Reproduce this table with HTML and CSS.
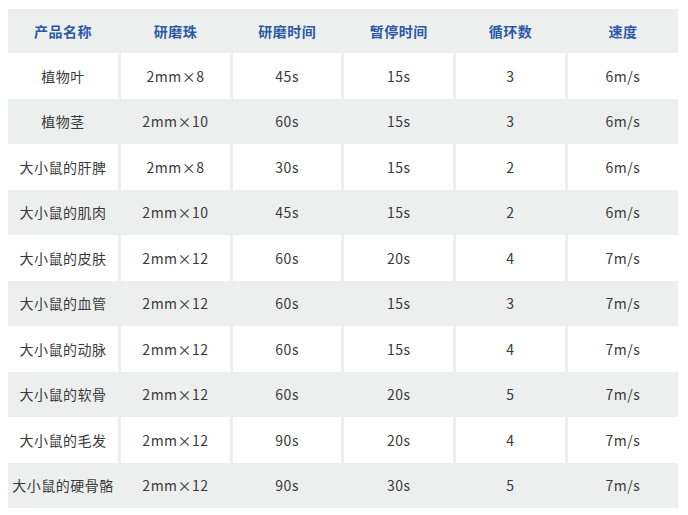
FILE: index.html
```html
<!DOCTYPE html>
<html lang="zh">
<head>
<meta charset="utf-8">
<link rel="stylesheet" href="styles.css">
</head>
<body>
<table class="spec">
<thead>
<tr><th>产品名称</th><th>研磨珠</th><th>研磨时间</th><th>暂停时间</th><th>循环数</th><th>速度</th></tr>
</thead>
<tbody>
<tr><td>植物叶</td><td>2mm×8</td><td>45s</td><td>15s</td><td>3</td><td>6m/s</td></tr>
<tr><td>植物茎</td><td>2mm×10</td><td>60s</td><td>15s</td><td>3</td><td>6m/s</td></tr>
<tr><td>大小鼠的肝脾</td><td>2mm×8</td><td>30s</td><td>15s</td><td>2</td><td>6m/s</td></tr>
<tr><td>大小鼠的肌肉</td><td>2mm×10</td><td>45s</td><td>15s</td><td>2</td><td>6m/s</td></tr>
<tr><td>大小鼠的皮肤</td><td>2mm×12</td><td>60s</td><td>20s</td><td>4</td><td>7m/s</td></tr>
<tr><td>大小鼠的血管</td><td>2mm×12</td><td>60s</td><td>15s</td><td>3</td><td>7m/s</td></tr>
<tr><td>大小鼠的动脉</td><td>2mm×12</td><td>60s</td><td>15s</td><td>4</td><td>7m/s</td></tr>
<tr><td>大小鼠的软骨</td><td>2mm×12</td><td>60s</td><td>20s</td><td>5</td><td>7m/s</td></tr>
<tr><td>大小鼠的毛发</td><td>2mm×12</td><td>90s</td><td>20s</td><td>4</td><td>7m/s</td></tr>
<tr><td>大小鼠的硬骨骼</td><td>2mm×12</td><td>90s</td><td>30s</td><td>5</td><td>7m/s</td></tr>
</tbody>
</table>
</body>
</html>
```
FILE: styles.css
```css
html, body {
  margin: 0;
  padding: 0;
  background: #ffffff;
}
body {
  padding: 9px 10px 0 8px;
  font-family: "Noto Sans CJK SC", "Noto Sans", sans-serif;
}
.spec {
  width: 670px;
  border-collapse: collapse;
  table-layout: fixed;
  font-size: 14px;
  letter-spacing: 0.5px;
}
.spec th, .spec td {
  text-align: center;
  vertical-align: middle;
  padding: 0;
  border-right: 3px solid #edefef;
}
.spec th:last-child, .spec td:last-child {
  border-right: none;
}
.spec thead tr {
  height: 44px;
  background: #edefef;
}
.spec th {
  color: #2a5aa6;
  font-weight: 700;
}
.spec tbody tr {
  height: 45.5px;
  background: #ffffff;
}
.spec tbody tr:nth-child(even) {
  background: #edefef;
}
.spec td {
  color: #3a3a3a;
  font-weight: 400;
}
```
